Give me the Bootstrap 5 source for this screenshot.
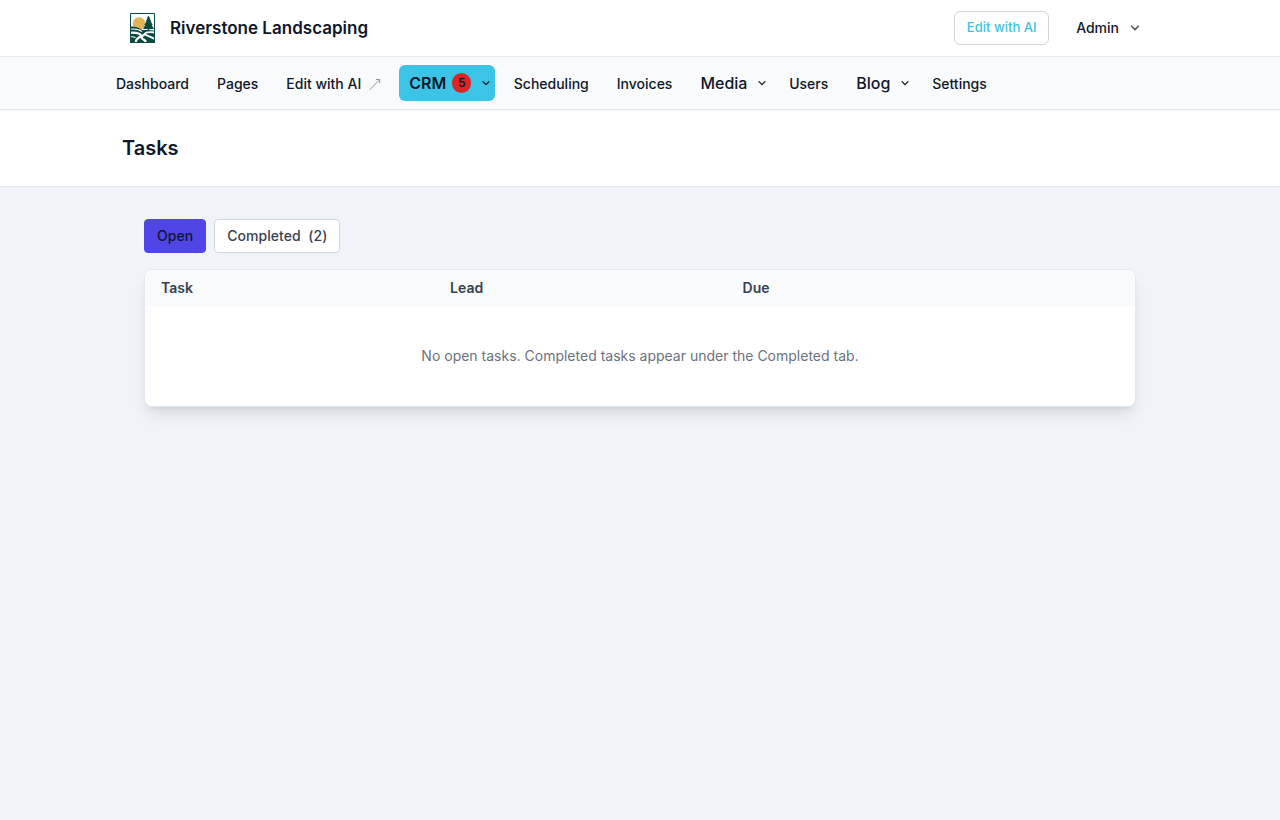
<!DOCTYPE html>
<html lang="en">
<head>
<meta charset="utf-8">
<meta name="viewport" content="width=device-width, initial-scale=1">
<title>Tasks</title>
<link href="https://cdn.jsdelivr.net/npm/bootstrap@5.3.0/dist/css/bootstrap.min.css" rel="stylesheet">
<style>
body{font-family:Inter,"Liberation Sans",sans-serif;background:#f0f4f9;color:#0f172a;font-size:14px;line-height:20px;font-weight:500;min-height:100vh}
.topbar{height:57px;background:#fff;border-bottom:1px solid #e2e8f0}
.topbar .wrap{padding:0 17px 0 10px}
.wrap{width:1040px;margin:0 auto}
.brand{font-size:17px;font-weight:600;margin-left:15px;letter-spacing:.01px}
.ai{height:34px;border:1px solid #d1d5db;border-radius:6px;color:#3bc4e6;font-size:13px;width:95px;text-align:center;line-height:31px;text-decoration:none;margin-right:27px}
.mainnav{height:53px;background:#f8fafc;border-bottom:1px solid #e2e8f0;box-shadow:0 1px 2px rgba(0,0,0,.05);position:relative}
.mainnav .wrap{width:1068px;height:52px}
.item{height:36px;padding:2px 10px 0;margin-right:8px;border-radius:6px;color:#0f172a;text-decoration:none;white-space:nowrap;display:flex;align-items:center}
.item.big{font-size:16px;padding:0 3.8px 0 10px}
.item.big svg{margin-left:10px}
.item.on{background:#3bc4e6;font-weight:600;width:96px;margin-right:8.5px}
.cnt{width:19px;height:20px;border-radius:10px;background:#dc2626;font-size:12px;display:flex;align-items:center;justify-content:center;margin-left:6px}
.pagehead{height:77px;background:#fff;border-bottom:1px solid #e2e8f0}
h1{font-size:20px;font-weight:600;line-height:28px;margin:0 0 0 2px}
main{width:992px;margin:32px auto 0}
.tab{height:34px;border:1px solid #d1d5db;background:#fff;border-radius:4px;padding:0 12px;line-height:32px;color:#374151;letter-spacing:.05px;text-decoration:none}
.tab.on{background:#4f46e5;border-color:#4f46e5;color:#0f172a}
.panel{border:1px solid #e2e8f0;border-radius:8px;background:#fff;overflow:hidden;margin-top:16px;box-shadow:0 10px 15px -3px rgba(0,0,0,.1),0 4px 6px -4px rgba(0,0,0,.1)}
.panel table{width:100%;table-layout:fixed}
.panel th{background:#f8fafc;height:36px;padding:0 16px;font-weight:600;color:#374151;letter-spacing:.05px}
.panel td{height:100px;text-align:center;color:#6b7280;font-weight:400}
</style>
</head>
<body>
<header class="topbar"><div class="wrap h-100 d-flex align-items-center">
<svg width="25" height="30" viewBox="0 0 25 30"><path fill="#fff" d="M0 0h25v30H0z"/><circle cx="9" cy="10.500" r="6.200" fill="#e0b354"/><path fill="#0b4a42" d="M18.500 2.500l1.700 3-.7-.1 2 3-1-.1 2.300 3.500-1.200-.1 2.400 4.200h-4.700v2.500h-1.600V16h-4.700l2.400-4.200-1.200.1 2.300-3.500-1 .1 2-3-.7.1z"/><path fill="#0b4a42" d="M0 13.500c5-.5 9 .6 12 3.500 4 0 8.500-.2 13 .8V30H0z"/><g fill="none" stroke="#fff"><path stroke-width="1.100" d="M.5 16.200c5-.6 9 .3 11.500 2.500"/><path stroke-width="1.800" d="M24.500 19.500c-5-1-10 .2-9.500 1.500.5 1.500 6.500 3 9.500 5"/><path stroke-width="2.200" d="M.5 19.800c6-.4 12 1 10 3.500-1.500 1.800-5 2.200-4.500 5.700M16 20.800c-4 1.700-5.500 3.500-3.500 5 1.300 1 2.500 1.200 3.500 3.200"/><path stroke-width="1.100" d="M.5 23.800c2-.3 3.500 0 5 .7"/></g><path fill="none" stroke="#0b4a42" d="M.5.5h24v29H.5z"/></svg>
<span class="brand">Riverstone Landscaping</span>
<a class="ai ms-auto">Edit with AI</a><span>Admin</span>
<svg class="ms-2" width="16" height="16" viewBox="0 0 16 16" fill="none" stroke="#555b64" stroke-width="1.600" stroke-linecap="round" stroke-linejoin="round"><path d="M4.600 6.200 8 9.600l3.400-3.400"/></svg>
</div></header>
<nav class="mainnav"><div class="wrap d-flex align-items-center">
<a class="item">Dashboard</a><a class="item">Pages</a>
<a class="item">Edit with AI<svg class="ms-2" width="12" height="13" viewBox="0 0 12 13" fill="none" stroke="#777d88" stroke-width=".8"><path d="M.5 12 10.700 1.500M7 1.500h3.700v3.700"/></svg></a>
<a class="item big on">CRM<span class="cnt">5</span><svg width="10" height="10" viewBox="0 0 10 10" fill="none" stroke="#0f172a" stroke-width="1.300" stroke-linecap="round" stroke-linejoin="round"><path d="M2 3.600l3 3 3-3"/></svg></a>
<a class="item">Scheduling</a><a class="item">Invoices</a>
<a class="item big">Media<svg width="10" height="10" viewBox="0 0 10 10" fill="none" stroke="#0f172a" stroke-width="1.300" stroke-linecap="round" stroke-linejoin="round"><path d="M2 3.600l3 3 3-3"/></svg></a>
<a class="item">Users</a>
<a class="item big">Blog<svg width="10" height="10" viewBox="0 0 10 10" fill="none" stroke="#0f172a" stroke-width="1.300" stroke-linecap="round" stroke-linejoin="round"><path d="M2 3.600l3 3 3-3"/></svg></a>
<a class="item">Settings</a>
</div></nav>
<section class="pagehead d-flex align-items-center"><div class="wrap"><h1>Tasks</h1></div></section>
<main><div class="d-flex gap-2"><a class="tab on">Open</a><a class="tab">Completed&nbsp; (2)</a></div>
<div class="panel"><table><colgroup><col style="width:289px"><col style="width:292.500px"><col></colgroup><thead><tr><th>Task</th><th>Lead</th><th>Due</th></tr></thead><tbody><tr><td colspan="3">No open tasks. Completed tasks appear under the Completed tab.</td></tr></tbody></table></div>
</main>
<script src="https://cdn.jsdelivr.net/npm/bootstrap@5.3.0/dist/js/bootstrap.bundle.min.js"></script>
</body>
</html>
